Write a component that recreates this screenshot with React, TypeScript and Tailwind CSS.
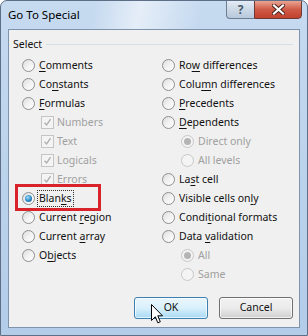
import React from "react";

type Item = {
  label: string;
  u?: number; // index of underlined mnemonic
  kind: "radio" | "check" | "subradio";
  checked?: boolean;
  disabled?: boolean;
  focus?: boolean;
};

const left: Item[] = [
  { label: "Comments", u: 0, kind: "radio" },
  { label: "Constants", u: 2, kind: "radio" },
  { label: "Formulas", u: 0, kind: "radio" },
  { label: "Numbers", kind: "check", checked: true, disabled: true },
  { label: "Text", kind: "check", checked: true, disabled: true },
  { label: "Logicals", kind: "check", checked: true, disabled: true },
  { label: "Errors", kind: "check", checked: true, disabled: true },
  { label: "Blanks", u: 4, kind: "radio", checked: true, focus: true },
  { label: "Current region", u: 8, kind: "radio" },
  { label: "Current array", u: 8, kind: "radio" },
  { label: "Objects", u: 1, kind: "radio" },
];

const right: Item[] = [
  { label: "Row differences", u: 2, kind: "radio" },
  { label: "Column differences", u: 4, kind: "radio" },
  { label: "Precedents", u: 0, kind: "radio" },
  { label: "Dependents", u: 0, kind: "radio" },
  { label: "Direct only", kind: "subradio", checked: true, disabled: true },
  { label: "All levels", kind: "subradio", disabled: true },
  { label: "Last cell", u: 2, kind: "radio" },
  { label: "Visible cells only", u: 16, kind: "radio" },
  { label: "Conditional formats", u: 5, kind: "radio" },
  { label: "Data validation", u: 5, kind: "radio" },
  { label: "All", kind: "subradio", checked: true, disabled: true },
  { label: "Same", kind: "subradio", disabled: true },
];

function Label({ text, u }: { text: string; u?: number }) {
  if (u === undefined) return <>{text}</>;
  return (
    <>
      {text.slice(0, u)}
      <span className="underline underline-offset-[2px]">{text[u]}</span>
      {text.slice(u + 1)}
    </>
  );
}

function Radio({ checked, disabled }: { checked?: boolean; disabled?: boolean }) {
  return (
    <div
      className={`w-[13px] h-[13px] shrink-0 rounded-full border grid place-items-center ${
        disabled
          ? "border-[#c8c8c8] bg-[#f4f4f4]"
          : "border-[#8e8f8f] bg-gradient-to-br from-[#dcdcdc] via-[#f2f2f2] to-[#ffffff]"
      }`}
    >
      {checked && (
        <div
          className={`w-[7px] h-[7px] rounded-full ${
            disabled
              ? "bg-[#b4b4b4]"
              : "bg-[radial-gradient(circle_at_40%_35%,#9fdcfa,#2a89c4_55%,#12507f)]"
          }`}
        />
      )}
    </div>
  );
}

function Check({ disabled }: { disabled?: boolean }) {
  return (
    <div
      className={`w-[13px] h-[13px] shrink-0 border grid place-items-center ${
        disabled ? "border-[#c5c5c5] bg-[#f4f4f4]" : "border-[#8e8f8f] bg-white"
      }`}
    >
      <svg width="9" height="9" viewBox="0 0 9 9">
        <path d="M1.5 4.8 L3.6 7 L7.6 1.2" fill="none" stroke="#b0b0b0" strokeWidth="1.4" />
      </svg>
    </div>
  );
}

function Row({ item }: { item: Item }) {
  const text = item.disabled ? "text-[#a0a0a0]" : "text-[#111]";
  const indent =
    item.kind === "check" ? "pl-[19px] gap-[3px]" : item.kind === "subradio" ? "pl-[19px] gap-[4px]" : "gap-[4px]";
  return (
    <div className={`h-[19px] flex items-center ${indent}`}>
      {item.kind === "check" ? <Check disabled={item.disabled} /> : <Radio checked={item.checked} disabled={item.disabled} />}
      <span
        className={`${text} leading-[13px] ${
          item.focus ? "outline outline-1 outline-dotted outline-[#333] outline-offset-[1px]" : ""
        }`}
      >
        <Label text={item.label} u={item.u} />
      </span>
    </div>
  );
}

function Cursor() {
  return (
    <svg width="13" height="21" viewBox="0 0 13 21" className="absolute left-[150px] top-[303px]">
      <path
        d="M0.5 0.5 L0.5 16.5 L4.3 12.8 L6.8 18.8 L9.3 17.8 L6.8 11.8 L11.5 11.8 Z"
        fill="#fff"
        stroke="#000"
        strokeWidth="1"
        strokeLinejoin="miter"
      />
    </svg>
  );
}

export default function App() {
  return (
    <div
      className="relative w-[308px] h-[336px] overflow-hidden rounded-t-[7px] border border-[#5d6f86] bg-gradient-to-b from-[#c6daf0] via-[#bcd3ec] to-[#b3cce8] flex flex-col"
      style={{ fontFamily: '"Noto Sans", "Open Sans", sans-serif' }}
    >
      {/* Title bar */}
      <div className="h-[28px] shrink-0 flex items-start relative">
        <div className="absolute inset-0 bg-[linear-gradient(100deg,rgba(255,255,255,0)_30%,rgba(255,255,255,0.55)_45%,rgba(255,255,255,0)_65%)]" />
        <div className="relative pl-[7px] pt-[6px] text-[11.5px] text-black leading-[16px]">Go To Special</div>
        <div className="relative ml-auto mr-[5px] flex h-[19px] -mt-px">
          <div className="w-[28px] h-full rounded-bl-[4px] border border-[#6e7f93] border-r-0 bg-gradient-to-b from-[#e4ecf5] via-[#ccd8e6] to-[#b8c9dd] grid place-items-center text-[12px] font-bold text-[#4a5a6d] leading-none">
            ?
          </div>
          <div className="w-[48px] h-full rounded-br-[4px] border border-[#6e3a34] bg-gradient-to-b from-[#e8a493] via-[#cf5a45] to-[#c1402e] grid place-items-center">
            <svg width="13" height="11" viewBox="0 0 13 11">
              <path d="M2 1.5 L11 9.5 M11 1.5 L2 9.5" stroke="#47201c" strokeWidth="4" strokeLinecap="square" />
              <path d="M2 1.5 L11 9.5 M11 1.5 L2 9.5" stroke="#fff" strokeWidth="2.2" strokeLinecap="square" />
            </svg>
          </div>
        </div>
      </div>

      {/* Client area */}
      <div className="mx-[7px] mb-[7px] flex-1 border border-[#7f93ad] bg-[#f0f0f0] flex flex-col text-[10.5px]">
        <div className="flex items-center h-[14px] mt-[7px] pl-[4px] pr-[6px]">
          <span className="text-[#111] leading-[13px]">Select</span>
          <div className="flex-1 h-px bg-[#d5dfe5] ml-[4px]" />
        </div>

        <div className="flex mt-[5px] pl-[13px]">
          <div className="w-[140px]">
            {left.map((it) => (
              <Row key={it.label} item={it} />
            ))}
          </div>
          <div>
            {right.map((it) => (
              <Row key={it.label + it.kind} item={it} />
            ))}
          </div>
        </div>

        <div className="mt-auto mb-[8px] mr-[6px] flex justify-end gap-[11px]">
          <button className="w-[74px] h-[22px] rounded-[3px] border border-[#3c7fb1] bg-gradient-to-b from-[#eaf6fd] via-[#d9f0fc] to-[#a7d9f5] text-[#111] shadow-[inset_0_0_0_1px_rgba(255,255,255,0.7)]">
            OK
          </button>
          <button className="w-[74px] h-[22px] rounded-[3px] border border-[#707070] bg-gradient-to-b from-[#f2f2f2] via-[#ebebeb] to-[#cfcfcf] text-[#111] shadow-[inset_0_0_0_1px_rgba(255,255,255,0.7)]">
            Cancel
          </button>
        </div>
      </div>

      {/* Highlight box */}
      <div className="absolute left-[14px] top-[183px] w-[86px] h-[27px] border-[3px] border-[#d9232b]" />
      <Cursor />
    </div>
  );
}
